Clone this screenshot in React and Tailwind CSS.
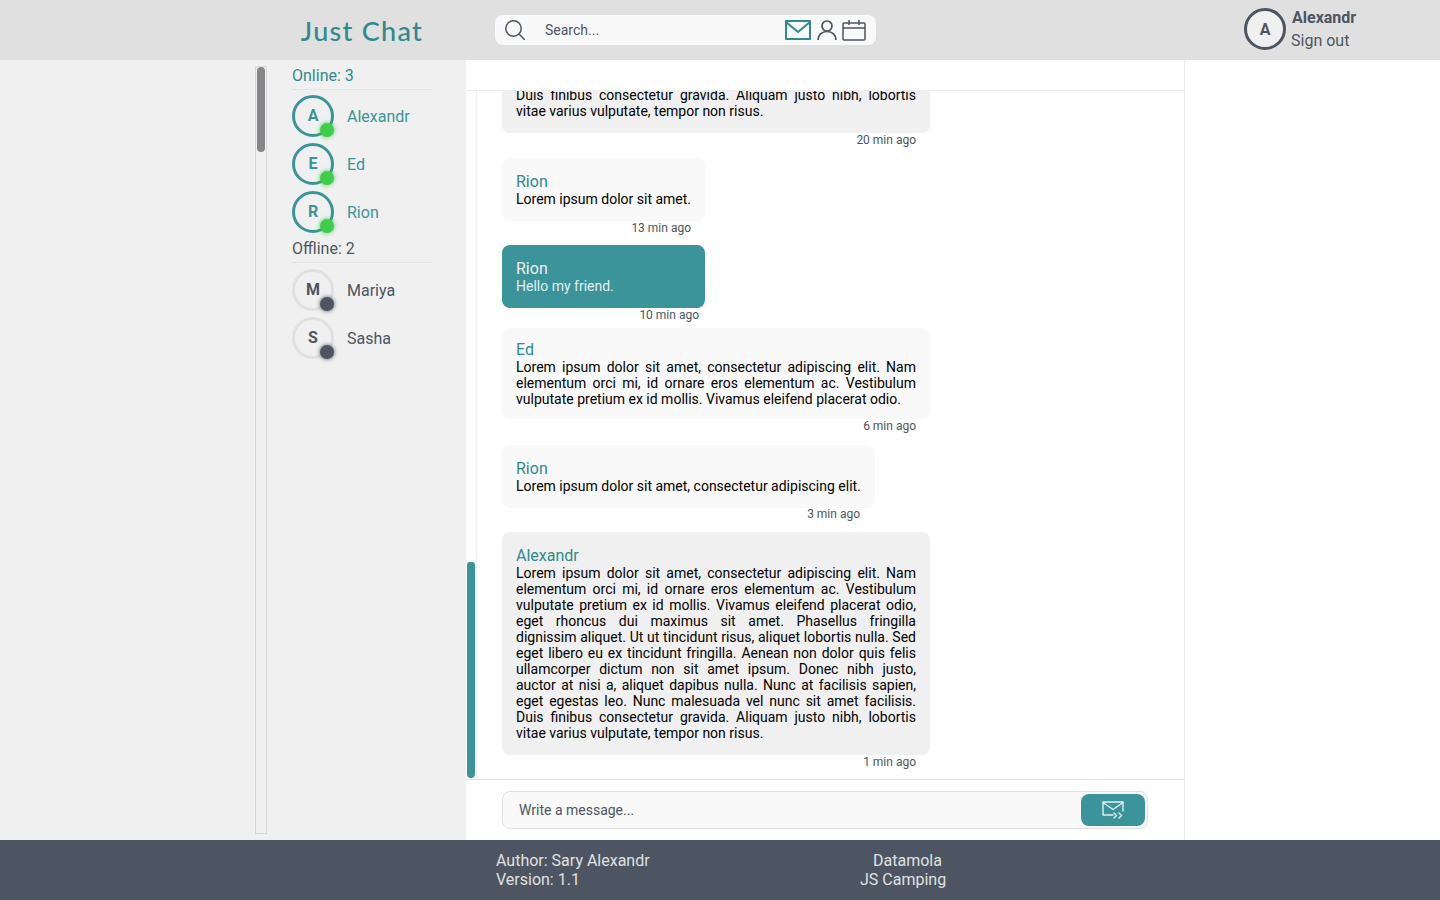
const LONG = "Lorem ipsum dolor sit amet, consectetur adipiscing elit. Nam elementum orci mi, id ornare eros elementum ac. Vestibulum vulputate pretium ex id mollis. Vivamus eleifend placerat odio, eget rhoncus dui maximus sit amet. Phasellus fringilla dignissim aliquet. Ut ut tincidunt risus, aliquet lobortis nulla. Sed eget libero eu ex tincidunt fringilla. Aenean non dolor quis felis ullamcorper dictum non sit amet ipsum. Donec nibh justo, auctor at nisi a, aliquet dapibus nulla. Nunc at facilisis sapien, eget egestas leo. Nunc malesuada vel nunc sit amet facilisis. Duis finibus consectetur gravida. Aliquam justo nibh, lobortis vitae varius vulputate, tempor non risus.";

function User({ name, online }) {
  return (
    <div className="flex items-center h-[48px]">
      <div className={`relative w-[42px] h-[42px] rounded-full border-[3px] flex items-center justify-center font-bold text-base ${online ? "border-[#3b9499] text-[#3b9499]" : "border-[#e0e0e0] text-[#4c5561]"}`}>
        {name[0]}
        <span className={`absolute right-[-3px] bottom-[-3px] w-[14px] h-[14px] rounded-full ${online ? "bg-[#3fce4c] shadow-[0_0_4px_#3fce4c]" : "bg-[#4c5561] shadow-[0_0_4px_#4c5561]"}`} />
      </div>
      <span className={`ml-[13px] pt-[2px] text-base ${online ? "text-[#3b9499]" : "text-[#4c5561]"}`}>{name}</span>
    </div>
  );
}

function Msg({ name, text, time, mine, wide, w, py = "pt-[15px] pb-[14px]", mb, timeClass = "pr-[14px]" }) {
  return (
    <div className={mb}>
      <div className={`${w} rounded-lg px-[14px] ${py} ${mine === "own" ? "bg-[#3b9499] text-[#e0f0f0]" : mine === "me" ? "bg-[#f0f0f0] text-black" : "bg-[#f9f9f9] text-black"}`}>
        <div className={`text-base leading-[18px] ${mine === "own" ? "text-[#f0f0f0]" : "text-[#2f8a8f]"}`}>{name}</div>
        <p className={`text-sm leading-4 ${wide ? "text-justify" : "whitespace-nowrap"}`}>{text}</p>
      </div>
      <div className={`${w} text-right text-xs leading-[14px] text-[#4c5561] ${timeClass}`}>{time}</div>
    </div>
  );
}

export default function App() {
  return (
    <div className="h-screen flex flex-col overflow-hidden bg-white font-['Roboto',sans-serif]">
      <header className="h-[60px] shrink-0 bg-[#e0e0e0] flex items-center">
        <div className="w-[495px] shrink-0 pl-[292px]">
          <div className="w-[140px] pt-[2px] text-center text-[27px] font-['Lato',sans-serif] font-medium tracking-[1.3px] text-[#2f8a8f] whitespace-nowrap">Just Chat</div>
        </div>
        <div className="w-[381px] h-[30px] shrink-0 rounded-lg bg-[#f9f9f9] flex items-center pl-[10px] pr-[10px]">
          <svg width="20" height="20" viewBox="0 0 20 20" fill="none" stroke="#4c5561" strokeWidth="1.5" strokeLinecap="round"><circle cx="8.500" cy="8.500" r="7.700" /><path d="M14 14l5.500 5.500" /></svg>
          <span className="ml-[20px] text-sm text-[#4c5561] flex-1">Search...</span>
          <svg width="26" height="20" viewBox="0 0 26 20" fill="none" stroke="#2f8a8f" strokeWidth="2" strokeLinejoin="round"><rect x="1" y="1" width="24" height="18" /><path d="M1 2l12 10L25 2" /></svg>
          <svg className="ml-[6px]" width="20" height="20" viewBox="0 0 20 20" fill="none" stroke="#4c5561" strokeWidth="1.7" strokeLinecap="round"><circle cx="10" cy="6" r="5" /><path d="M1 20c0-5 3.500-8.500 9-8.500s9 3.500 9 8.500" /></svg>
          <svg className="ml-[5px]" width="24" height="21" viewBox="0 0 24 21" fill="none" stroke="#4c5561" strokeWidth="1.5"><rect x="1" y="3" width="22" height="17" rx="1" /><path d="M1 8h22M7 0v5M17 0v5" /></svg>
        </div>
        <div className="ml-[368px] mb-[2px] w-[42px] h-[42px] shrink-0 rounded-full border-[3px] border-[#4c5561] bg-[#f0f0f0] flex items-center justify-center font-bold text-base text-[#4c5561] pt-[2px]">A</div>
        <div className="ml-[5px] mb-[2px] text-base text-[#4c5561]">
          <div className="font-bold leading-[23px] ml-[1px]">Alexandr</div>
          <div className="leading-[23px]">Sign out</div>
        </div>
      </header>

      <div className="flex-1 min-h-0 flex">
        <aside className="w-[466px] shrink-0 bg-[#f0f0f0] flex py-[6px] pl-[255px]">
          <div className="w-[12px] shrink-0 border border-[#d8d8d8] pl-[1px]">
            <div className="w-[8px] h-[85px] rounded-full bg-[#868689]" />
          </div>
          <div className="ml-[25px] w-[140px]">
            <div className="h-[24px] text-base leading-[19px] text-[#2f8a8f] border-b border-[#e0e0e0]">Online: 3</div>
            <div className="pt-[2px]">
              <User name="Alexandr" online />
              <User name="Ed" online />
              <User name="Rion" online />
            </div>
            <div className="h-[24px] text-base leading-[19px] text-[#4c5561] border-b border-[#e0e0e0] mt-[3px]">Offline: 2</div>
            <div className="pt-[3px]">
              <User name="Mariya" />
              <User name="Sasha" />
            </div>
          </div>
        </aside>

        <main className="w-[719px] shrink-0 border-r border-[#e9e9e9] flex flex-col min-h-0">
          <div className="h-[31px] shrink-0 border-b border-[#eeeeee]" />
          <div className="flex-1 min-h-0 flex border-b border-[#e5e5e5]">
            <div className="w-[11px] shrink-0 border-r border-[#eeeeee] flex flex-col justify-end pl-[1px] pb-[1px]">
              <div className="w-[8px] h-[216px] rounded-b-lg rounded-t-md bg-[#3b9499]" />
            </div>
            <div className="flex-1 min-w-0 pl-[25px] pb-[10px] flex flex-col justify-end overflow-hidden">
              <Msg name="Alexandr" mine="me" wide w="w-[428px]" text={LONG} time="20 min ago" mb="mb-[11px]" />
              <Msg name="Rion" w="w-[203px]" text="Lorem ipsum dolor sit amet." time="13 min ago" mb="mb-[10px]" />
              <Msg name="Rion" mine="own" w="w-[203px]" text="Hello my friend." time="10 min ago" mb="mb-[6px]" timeClass="pr-[6px]" />
              <Msg name="Ed" wide w="w-[428px]" py="pt-[13px] pb-[12px]" text="Lorem ipsum dolor sit amet, consectetur adipiscing elit. Nam elementum orci mi, id ornare eros elementum ac. Vestibulum vulputate pretium ex id mollis. Vivamus eleifend placerat odio." time="6 min ago" mb="mb-[12px]" />
              <Msg name="Rion" w="w-[373px]" text="Lorem ipsum dolor sit amet, consectetur adipiscing elit." time="3 min ago" mb="mb-[11px]" timeClass="pr-[15px] -mt-[1px]" />
              <Msg name="Alexandr" mine="me" wide w="w-[428px]" text={LONG} time="1 min ago" />
            </div>
          </div>
          <div className="h-[60px] shrink-0 flex items-center pl-[36px]">
            <div className="w-[646px] h-[38px] rounded-lg border border-[#e0e0e0] bg-[#f9f9f9] flex items-center pl-[16px] pr-[2px]">
              <span className="flex-1 text-sm text-[#4c5561]">Write a message...</span>
              <div className="w-[64px] h-[32px] rounded-lg bg-[#3b9499] flex items-center justify-center">
                <svg width="22" height="18" viewBox="0 0 22 18" fill="none" stroke="#e0f0f0" strokeWidth="1.4" strokeLinecap="round" strokeLinejoin="round"><path d="M11 14H1V1h20v9" /><path d="M1 1.500l10 7 10-7" /><path d="M12 12l2.500 2.500L12 17M17 12l2.500 2.500L17 17" /></svg>
              </div>
            </div>
          </div>
        </main>
      </div>

      <footer className="h-[60px] shrink-0 bg-[#4c5561] text-[#e0e0e0] text-base leading-[19px] flex items-center pl-[496px]">
        <div className="w-[364px]">
          <div>Author: Sary Alexandr</div>
          <div>Version: 1.1</div>
        </div>
        <div>
          <div className="pl-[13px]">Datamola</div>
          <div>JS Camping</div>
        </div>
      </footer>
    </div>
  );
}
